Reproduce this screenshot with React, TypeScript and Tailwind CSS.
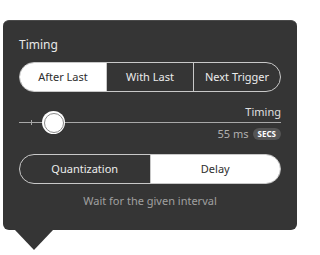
import React from "react";

const font = { fontFamily: '"Noto Sans", "Open Sans", sans-serif' };

const Segmented = ({
  items,
  active,
}: {
  items: string[];
  active: number;
}) => (
  <div className="flex h-[30px] rounded-full border border-[#c8c8c8] overflow-hidden">
    {items.map((label, i) => (
      <div
        key={label}
        className={
          "flex flex-1 items-center justify-center text-[11px] " +
          (i > 0 ? "border-l border-[#c8c8c8] " : "") +
          (i === active ? "bg-white text-[#2e2e2e]" : "text-[#ececec]")
        }
      >
        {label}
      </div>
    ))}
  </div>
);

export default function App() {
  return (
    <div className="w-[300px] h-[255px] bg-white" style={font}>
      <div className="pt-5 pl-[3px]">
        <div className="relative w-[294px] h-[210px] rounded-md bg-[#353535] border-t border-[#4a4a4a] px-4 pt-[15px]">
          <div className="text-[12px] leading-[18px] text-[#e8e8e8]">Timing</div>

          <div className="mt-2">
            <Segmented items={["After Last", "With Last", "Next Trigger"]} active={0} />
          </div>

          <div className="relative mt-3">
            <div className="text-right text-[11px] leading-4 text-[#e0e0e0]">Timing</div>
            <div className="mt-[2px] h-px bg-[#a8a8a8]" />
            <div className="absolute left-3 top-[16px] h-[5px] w-px bg-[#a8a8a8]" />
            <div className="absolute left-[23px] top-[7px] flex h-[23px] w-[23px] items-center justify-center rounded-full bg-white">
              <div className="h-[20px] w-[20px] rounded-full border border-[#8a8a8a] bg-white" />
            </div>
            <div className="mt-[3px] flex items-center justify-end gap-1 text-[11px] leading-4 text-[#b0b0b0]">
              <span>55 ms</span>
              <span className="flex h-[12px] items-center rounded-full bg-[#555555] px-[5px] text-[8px] font-bold leading-none text-white">
                SECS
              </span>
            </div>
          </div>

          <div className="mt-3">
            <Segmented items={["Quantization", "Delay"]} active={1} />
          </div>

          <div className="mt-[9px] text-center text-[11px] leading-4 text-[#a0a0a0]">
            Wait for the given interval
          </div>

          <svg
            className="absolute left-[12px] top-[209px]"
            width="38"
            height="21"
            viewBox="0 0 38 21"
          >
            <path d="M0 0 L38 0 L19 20 Z" fill="#353535" />
          </svg>
        </div>
      </div>
    </div>
  );
}
